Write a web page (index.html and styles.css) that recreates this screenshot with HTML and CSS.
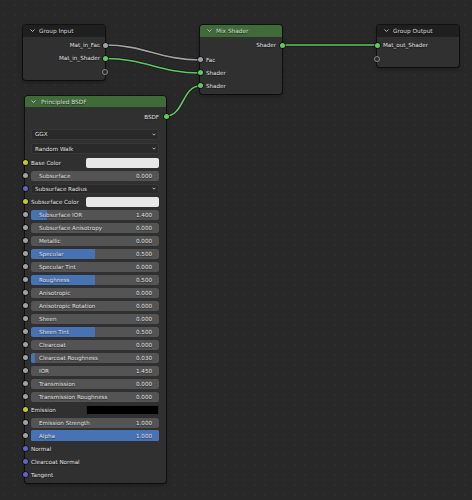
FILE: index.html
```html
<!DOCTYPE html>
<html lang="en">
<head>
<meta charset="utf-8">
<title>Shader Node Group</title>
<link rel="stylesheet" href="styles.css">
</head>
<body>
<div class="editor">
  <svg class="wires" width="472" height="500" viewBox="0 0 472 500">
    <g class="wire-shadow">
      <path d="M105,45 C145,45 160,60 200,60"/>
      <path d="M105,58.5 C145,58.5 160,73 200,73"/>
      <path d="M166,116 C184,116 182,86 200,86"/>
      <path d="M282,45 L377,45"/>
    </g>
    <path class="wire float" d="M105,45 C145,45 160,60 200,60"/>
    <path class="wire shader" d="M105,58.5 C145,58.5 160,73 200,73"/>
    <path class="wire shader" d="M166,116 C184,116 182,86 200,86"/>
    <path class="wire shader" d="M282,45 L377,45"/>
  </svg>

  <!-- Group Input -->
  <div class="node group-in">
    <div class="node-head group-head">
      <svg class="chev" width="5" height="3" viewBox="0 0 5 3"><path d="M0.5,0.5 L2.5,2.5 L4.5,0.5"/></svg>
      <span>Group Input</span>
    </div>
    <div class="node-body">
      <div class="row out"><span>Mat_in_Fac</span><i class="sock right float"></i></div>
      <div class="row out"><span>Mat_in_Shader</span><i class="sock right shader"></i></div>
      <div class="row out"><i class="sock right empty"></i></div>
    </div>
  </div>

  <!-- Mix Shader -->
  <div class="node mix">
    <div class="node-head shader-head">
      <svg class="chev" width="5" height="3" viewBox="0 0 5 3"><path d="M0.5,0.5 L2.5,2.5 L4.5,0.5"/></svg>
      <span>Mix Shader</span>
    </div>
    <div class="node-body">
      <div class="row out"><span>Shader</span><i class="sock right shader"></i></div>
      <div class="mix-inputs">
        <div class="row in"><i class="sock left float"></i><span>Fac</span></div>
        <div class="row in"><i class="sock left shader"></i><span>Shader</span></div>
        <div class="row in"><i class="sock left shader"></i><span>Shader</span></div>
      </div>
    </div>
  </div>

  <!-- Group Output -->
  <div class="node group-out">
    <div class="node-head group-head">
      <svg class="chev" width="5" height="3" viewBox="0 0 5 3"><path d="M0.5,0.5 L2.5,2.5 L4.5,0.5"/></svg>
      <span>Group Output</span>
    </div>
    <div class="node-body">
      <div class="row in"><i class="sock left shader"></i><span>Mat_out_Shader</span></div>
      <div class="row in"><i class="sock left empty"></i></div>
    </div>
  </div>

  <!-- Principled BSDF -->
  <div class="node bsdf">
    <div class="node-head shader-head">
      <svg class="chev" width="5" height="3" viewBox="0 0 5 3"><path d="M0.5,0.5 L2.5,2.5 L4.5,0.5"/></svg>
      <span>Principled BSDF</span>
    </div>
    <div class="node-body bsdf-body">
      <div class="row out"><span>BSDF</span><i class="sock right shader"></i></div>
      <div class="menus">
        <div class="menu-row"><div class="menu"><span>GGX</span><svg class="dchev" width="4" height="3" viewBox="0 0 4 3"><path d="M0.5,0.7 L2,2.2 L3.5,0.7"/></svg></div></div>
        <div class="menu-row"><div class="menu"><span>Random Walk</span><svg class="dchev" width="4" height="3" viewBox="0 0 4 3"><path d="M0.5,0.7 L2,2.2 L3.5,0.7"/></svg></div></div>
      </div>

      <div class="row in"><i class="sock left color"></i><span class="lbl">Base Color</span><div class="swatch white"></div></div>
      <div class="row in"><i class="sock left float"></i><div class="slider"><b class="fill" style="width:0%"></b><span>Subsurface</span><em>0.000</em></div></div>
      <div class="row in"><i class="sock left vector"></i><div class="menu"><span>Subsurface Radius</span><svg class="dchev" width="4" height="3" viewBox="0 0 4 3"><path d="M0.5,0.7 L2,2.2 L3.5,0.7"/></svg></div></div>
      <div class="row in"><i class="sock left color"></i><span class="lbl">Subsurface Color</span><div class="swatch white"></div></div>
      <div class="row in"><i class="sock left float"></i><div class="slider"><b class="fill" style="width:12.3%"></b><span>Subsurface IOR</span><em>1.400</em></div></div>
      <div class="row in"><i class="sock left float"></i><div class="slider"><b class="fill" style="width:0%"></b><span>Subsurface Anisotropy</span><em>0.000</em></div></div>
      <div class="row in"><i class="sock left float"></i><div class="slider"><b class="fill" style="width:0%"></b><span>Metallic</span><em>0.000</em></div></div>
      <div class="row in"><i class="sock left float"></i><div class="slider"><b class="fill" style="width:50%"></b><span>Specular</span><em>0.500</em></div></div>
      <div class="row in"><i class="sock left float"></i><div class="slider"><b class="fill" style="width:0%"></b><span>Specular Tint</span><em>0.000</em></div></div>
      <div class="row in"><i class="sock left float"></i><div class="slider"><b class="fill" style="width:50%"></b><span>Roughness</span><em>0.500</em></div></div>
      <div class="row in"><i class="sock left float"></i><div class="slider"><b class="fill" style="width:0%"></b><span>Anisotropic</span><em>0.000</em></div></div>
      <div class="row in"><i class="sock left float"></i><div class="slider"><b class="fill" style="width:0%"></b><span>Anisotropic Rotation</span><em>0.000</em></div></div>
      <div class="row in"><i class="sock left float"></i><div class="slider"><b class="fill" style="width:0%"></b><span>Sheen</span><em>0.000</em></div></div>
      <div class="row in"><i class="sock left float"></i><div class="slider"><b class="fill" style="width:50%"></b><span>Sheen Tint</span><em>0.500</em></div></div>
      <div class="row in"><i class="sock left float"></i><div class="slider"><b class="fill" style="width:0%"></b><span>Clearcoat</span><em>0.000</em></div></div>
      <div class="row in"><i class="sock left float"></i><div class="slider"><b class="fill" style="width:3%"></b><span>Clearcoat Roughness</span><em>0.030</em></div></div>
      <div class="row in"><i class="sock left float"></i><div class="slider"><span>IOR</span><em>1.450</em></div></div>
      <div class="row in"><i class="sock left float"></i><div class="slider"><b class="fill" style="width:0%"></b><span>Transmission</span><em>0.000</em></div></div>
      <div class="row in"><i class="sock left float"></i><div class="slider"><b class="fill" style="width:0%"></b><span>Transmission Roughness</span><em>0.000</em></div></div>
      <div class="row in"><i class="sock left color"></i><span class="lbl">Emission</span><div class="swatch black"></div></div>
      <div class="row in"><i class="sock left float"></i><div class="slider"><span>Emission Strength</span><em>1.000</em></div></div>
      <div class="row in"><i class="sock left float"></i><div class="slider active"><b class="fill" style="width:100%"></b><span>Alpha</span><em>1.000</em></div></div>
      <div class="row in"><i class="sock left vector"></i><span class="lbl">Normal</span></div>
      <div class="row in"><i class="sock left vector"></i><span class="lbl">Clearcoat Normal</span></div>
      <div class="row in"><i class="sock left vector"></i><span class="lbl">Tangent</span></div>
    </div>
  </div>
</div>
</body>
</html>
```

FILE: styles.css
```css
html, body {
  margin: 0;
  padding: 0;
  background: #282828;
}

.editor {
  position: relative;
  width: 472px;
  height: 500px;
  overflow: hidden;
  background-color: #282828;
  background-image: radial-gradient(circle, rgba(255,255,255,0.035) 0.6px, transparent 0.9px);
  background-size: 10px 10px;
  font-family: "DejaVu Sans", sans-serif;
  font-size: 5.6px;
  color: #e2e2e2;
}

/* connection wires */
.wires {
  position: absolute;
  left: 0;
  top: 0;
}
.wires path {
  fill: none;
}
.wire-shadow path {
  stroke: rgba(0,0,0,0.45);
  stroke-width: 3px;
}
.wire {
  stroke-width: 1.6px;
}
.wire.float { stroke: #a3a3a3; }
.wire.shader { stroke: #63c763; }

/* nodes on the canvas */
.node {
  position: absolute;
  background: #303030;
  border-radius: 3px;
  box-shadow: 0 0 0 1px rgba(0,0,0,0.55), 0 2px 4px rgba(0,0,0,0.35);
}
.group-in  { left: 23px;  top: 25px; width: 82px; }
.mix       { left: 200px; top: 25px; width: 82px; }
.group-out { left: 377px; top: 25px; width: 82px; }
.bsdf      { left: 25px;  top: 96px; width: 141px; }

.node-head {
  height: 11.5px;
  display: flex;
  align-items: center;
  padding-left: 7px;
  gap: 4px;
  border-radius: 3px 3px 0 0;
  font-size: 5.8px;
  color: #dcdcdc;
  text-shadow: 0 0.5px 1px rgba(0,0,0,0.6);
}
.group-head { background: #1f1f1f; }
.shader-head { background: #3e6b37; }
.bsdf .node-head { height: 11px; padding-left: 6px; gap: 5px; }

.chev path, .dchev path {
  fill: none;
  stroke: #d6d6d6;
  stroke-width: 0.8px;
}

.node-body {
  padding: 2px 0 2px;
}

.row {
  position: relative;
  height: 13px;
  display: flex;
  align-items: center;
  text-shadow: 0 0.5px 1px rgba(0,0,0,0.55);
}
.row.out {
  justify-content: flex-end;
  padding-right: 5px;
}
.row.in {
  padding-left: 6px;
}
.mix .row.out { padding-right: 6px; }
.mix-inputs { padding-top: 1.5px; }

/* sockets */
.sock {
  position: absolute;
  top: 50%;
  width: 5px;
  height: 5px;
  margin-top: -2.5px;
  border-radius: 50%;
  box-shadow: 0 0 0 0.7px rgba(0,0,0,0.7);
}
.sock.left  { left: -2.5px; }
.sock.right { right: -2.5px; }
.sock.float  { background: #a1a1a1; }
.sock.shader { background: #63c763; }
.sock.color  { background: #c7c729; }
.sock.vector { background: #6363c7; }
.sock.empty {
  width: 4px;
  height: 4px;
  margin-top: -2.5px;
  background: #2a2a2a;
  border: 0.8px solid #8a8a8a;
  box-shadow: none;
}
.sock.right.empty { right: -2.9px; }
.sock.left.empty  { left: -2.9px; }

/* Principled BSDF body */
.bsdf-body {
  padding: 3px 0 2px;
}
.bsdf .row.out { padding-right: 7px; }
.bsdf .row.in  { padding-right: 7px; }

.menus { padding-top: 4px; }
.menu-row {
  height: 14.5px;
  display: flex;
  align-items: center;
  padding: 0 7px 0 6px;
}
.menu {
  flex: 1;
  height: 11px;
  display: flex;
  align-items: center;
  justify-content: space-between;
  padding: 0 3px 0 4px;
  background: #2a2a2a;
  border-radius: 2.5px;
  box-shadow: inset 0 0 0 0.7px #3c3c3c;
  text-shadow: 0 0.5px 1px rgba(0,0,0,0.55);
}
.row .menu { height: 10px; }

.lbl { flex: 1; }

.swatch {
  width: 73px;
  height: 10px;
  border-radius: 2px;
}
.swatch.white { background: #e8e8e8; }
.swatch.black { background: #000000; box-shadow: inset 0 0 0 0.7px #3c3c3c; }

.slider {
  position: relative;
  flex: 1;
  height: 10px;
  display: flex;
  align-items: center;
  justify-content: space-between;
  padding: 0 7px 0 8px;
  background: #545454;
  border-radius: 2.5px;
  overflow: hidden;
}
.slider .fill {
  position: absolute;
  left: 0;
  top: 0;
  bottom: 0;
  background: #4772b3;
}
.slider span, .slider em {
  position: relative;
  font-style: normal;
}
.slider.active {
  height: 11px;
  box-shadow: inset 0 0 0 0.8px #6d8fc8;
}
```
